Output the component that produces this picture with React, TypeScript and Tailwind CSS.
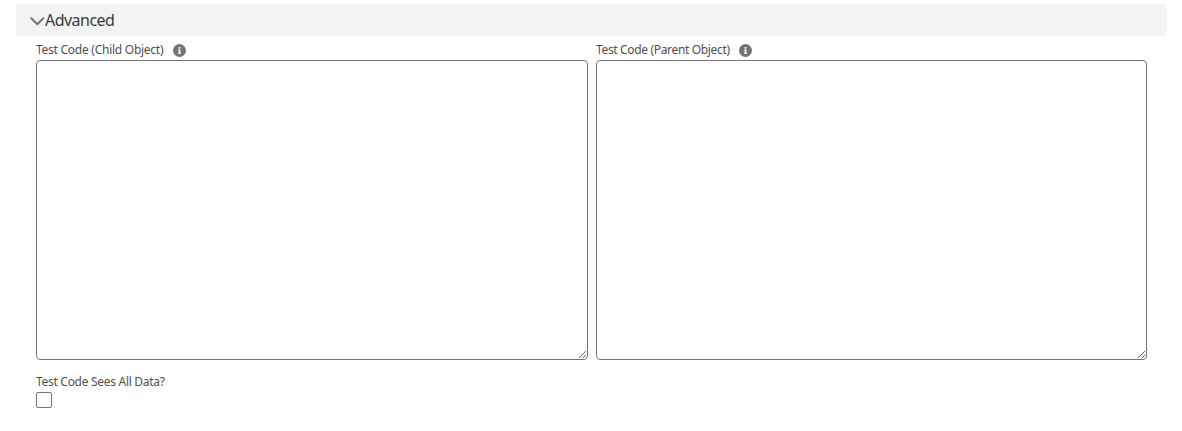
import { useState } from "react";

function InfoIcon() {
  return (
    <svg className="size-[13px] shrink-0" viewBox="0 0 13 13" aria-hidden="true">
      <circle cx="6.5" cy="6.5" r="6.5" fill="#747474" />
      <rect x="5.6" y="3" width="1.9" height="1.7" rx="0.6" fill="#fff" />
      <path d="M5 5.6h2.4v3.2h.7v.9H5v-.9h.7V6.5H5z" fill="#fff" />
    </svg>
  );
}

function CodeField({ id, label, tracking }: { id: string; label: string; tracking: string }) {
  return (
    <div className="min-w-0">
      <div className="flex h-6 items-center gap-[9.5px] pt-1">
        <label htmlFor={id} className={`text-xs leading-5 whitespace-nowrap text-[#505050] ${tracking}`}>
          {label}
        </label>
        <InfoIcon />
      </div>
      <textarea
        id={id}
        className="block h-[300px] w-full rounded-[4px] border border-[#747474] bg-white p-2 text-xs outline-none"
      />
    </div>
  );
}

export default function App() {
  const [seesAllData, setSeesAllData] = useState(false);
  return (
    <main className="h-[431px] w-[1182px] overflow-hidden bg-white pt-1 pl-4 font-['Noto_Sans','Open_Sans',sans-serif]">
      <section className="w-[1151px]">
        <h3 className="flex h-8 items-center rounded-[4px] bg-[#f3f3f3] pl-[14px]">
          <svg className="mt-[3px] h-[9px] w-[15px] shrink-0" viewBox="0 0 15 9" fill="none" stroke="#747474" strokeWidth="2" strokeLinecap="round" strokeLinejoin="round">
            <path d="M1.3 1.3L7.3 7.3L13.3 1.3" />
          </svg>
          <span className="text-base leading-6 tracking-[-0.53px] text-[#3a3a3a]">Advanced</span>
        </h3>
        <div className="grid grid-cols-[552px_551px] gap-x-2 pl-5">
          <CodeField id="child-code" label="Test Code (Child Object)" tracking="tracking-[-0.26px]" />
          <CodeField id="parent-code" label="Test Code (Parent Object)" tracking="tracking-[-0.34px]" />
        </div>
        <div className="mt-3 flex flex-col items-start pl-5">
          <label htmlFor="sees-all-data" className="text-xs leading-5 tracking-[-0.29px] text-[#505050]">
            Test Code Sees All Data?
          </label>
          <input
            id="sees-all-data"
            type="checkbox"
            checked={seesAllData}
            onChange={(e) => setSeesAllData(e.target.checked)}
            className="size-4 appearance-none rounded-[2px] border border-[#747474] bg-white checked:bg-[#0176d3]"
          />
        </div>
      </section>
    </main>
  );
}
